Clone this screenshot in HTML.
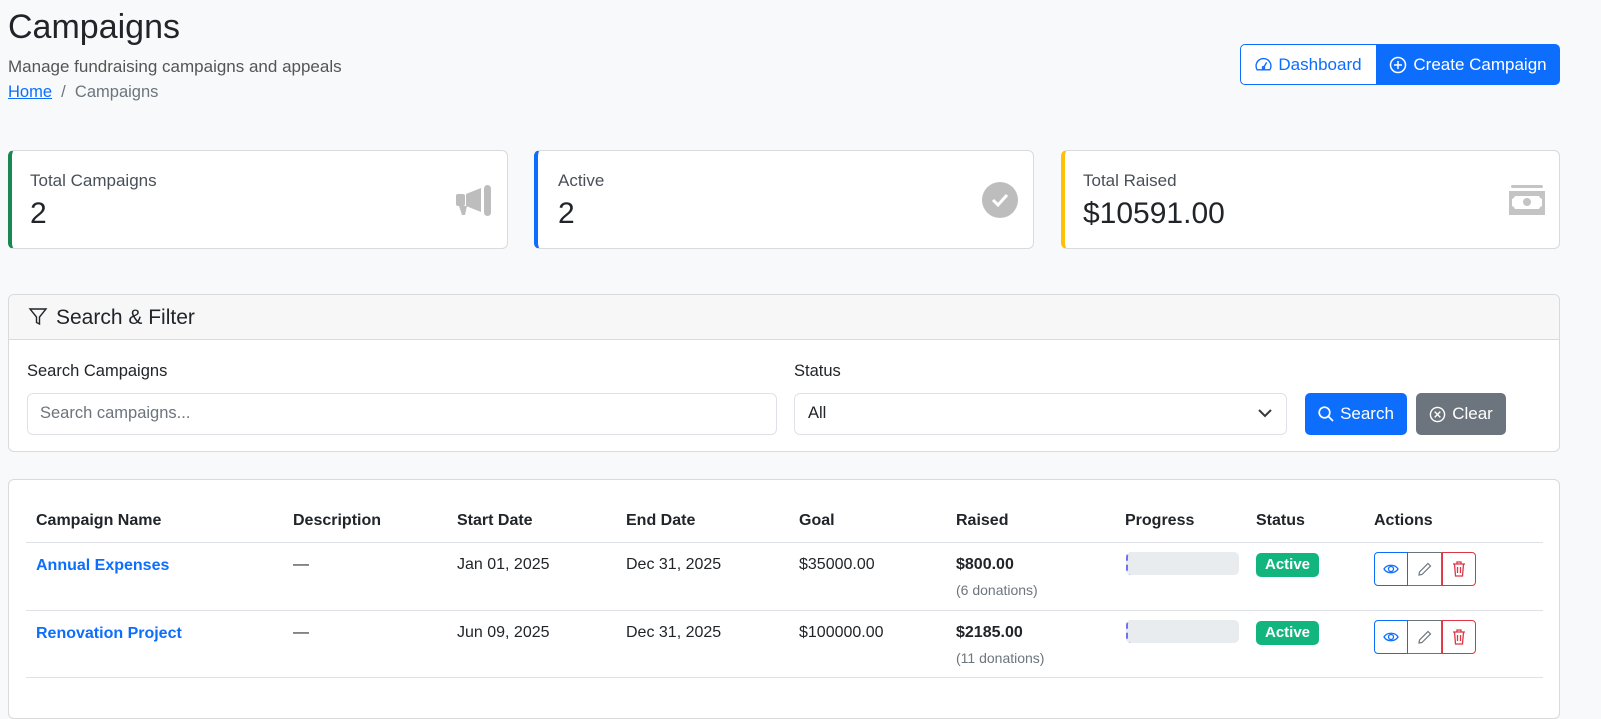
<!DOCTYPE html>
<html><head><style>
*{box-sizing:border-box;margin:0;padding:0}
body{width:1601px;height:706px;background:#f8f9fa;font-family:"Liberation Sans",sans-serif;color:#212529;position:relative;overflow:hidden}
.a{position:absolute}
.card{position:absolute;background:#fff;border:1px solid #dadada;border-radius:6px}
.lbl{font-size:17px;color:#495057}
.val{font-size:30px;color:#212529}
.btn{position:absolute;border-radius:5px;font-size:17px;display:flex;align-items:center;justify-content:center;gap:6px}
.ab{position:absolute;width:34px;height:34px;display:flex;align-items:center;justify-content:center}
</style></head><body>
<div class="a" style="left:8px;top:8px;font-size:34px;font-weight:500">Campaigns</div>
<div class="a" style="left:8px;top:57px;font-size:17px;color:#555">Manage fundraising campaigns and appeals</div>
<div class="a" style="left:8px;top:83px;font-size:16.5px;color:#6c757d"><span style="color:#0d6efd;text-decoration:underline">Home</span>&nbsp; / &nbsp;Campaigns</div>

<div class="btn" style="left:1240px;top:44px;width:137px;height:41px;border:1px solid #0d6efd;border-radius:5px 0 0 5px;color:#0d6efd;background:#fff">
<svg width="17" height="15" viewBox="0 0 16 14" fill="none" stroke="#0d6efd" stroke-width="1.3"><path d="M2 12 A7 7 0 1 1 14 12 Z"/><path d="M8 10 L11 5"/><circle cx="8" cy="10" r="1"/></svg>Dashboard</div>
<div class="btn" style="left:1376px;top:44px;width:184px;height:41px;background:#0d6efd;color:#fff;border-radius:0 5px 5px 0">
<svg width="18" height="18" viewBox="0 0 18 18" fill="none" stroke="#fff" stroke-width="1.5"><circle cx="9" cy="9" r="7.5"/><path d="M9 5v8M5 9h8"/></svg>Create Campaign</div>

<div class="card" style="left:8px;top:150px;width:500px;height:99px;border-left:4px solid #198754">
<div class="a lbl" style="left:18px;top:20px">Total Campaigns</div><div class="a val" style="left:18px;top:46px">2</div>
<svg class="a" style="left:444px;top:34px" width="38" height="32" viewBox="0 0 38 32" fill="#bdbdbd"><rect x="0" y="9" width="9" height="12" rx="2"/><path d="M10 9 L25 3 V27 L10 21Z"/><rect x="28" y="0" width="7" height="31" rx="3.5"/><path d="M3 21 L11 21 L9 30 L6 30Z"/></svg>
</div>
<div class="card" style="left:534px;top:150px;width:500px;height:99px;border-left:4px solid #0d6efd">
<div class="a lbl" style="left:20px;top:20px">Active</div><div class="a val" style="left:20px;top:46px">2</div>
<svg class="a" style="left:444px;top:31px" width="36" height="36" viewBox="0 0 36 36"><circle cx="18" cy="18" r="18" fill="#bdbdbd"/><path d="M11 18 L16 23 L25 13" stroke="#fff" stroke-width="3" fill="none"/></svg>
</div>
<div class="card" style="left:1061px;top:150px;width:499px;height:99px;border-left:4px solid #ffc107">
<div class="a lbl" style="left:18px;top:20px">Total Raised</div><div class="a val" style="left:18px;top:46px">$10591.00</div>
<svg class="a" style="left:444px;top:34px" width="36" height="30" viewBox="0 0 36 30" fill="#c4c4c4"><rect x="2" y="0" width="32" height="3" rx="1.5"/><path d="M0 6h36v24H0Z M6 11 a5 5 0 0 1-3 3v7a5 5 0 0 1 3 3h24a5 5 0 0 1 3-3v-7a5 5 0 0 1-3-3Z" fill-rule="evenodd"/><ellipse cx="18" cy="17" rx="4" ry="4"/></svg>
</div>

<div class="card" style="left:8px;top:294px;width:1552px;height:158px;overflow:hidden">
<div class="a" style="left:0;top:0;width:1552px;height:45px;background:#f7f7f7;border-bottom:1px solid #dadada"></div>
<svg class="a" style="left:19px;top:12px" width="20" height="20" viewBox="0 0 20 20" fill="none" stroke="#212529" stroke-width="1.4"><path d="M2 2h16l-6.5 8v7l-3-1.5V10Z"/></svg>
<div class="a" style="left:47px;top:11px;font-size:21px;font-weight:500">Search &amp; Filter</div>
<div class="a" style="left:18px;top:67px;font-size:16.5px">Search Campaigns</div>
<div class="a" style="left:18px;top:98px;width:750px;height:42px;border:1px solid #dee2e6;border-radius:6px;font-size:16.5px;color:#6c757d;padding:10px 12px">Search campaigns...</div>
<div class="a" style="left:785px;top:67px;font-size:16.5px">Status</div>
<div class="a" style="left:785px;top:98px;width:493px;height:42px;border:1px solid #dee2e6;border-radius:6px;font-size:16.5px;padding:10px 13px">All
<svg class="a" style="right:14px;top:14px" width="14" height="10" viewBox="0 0 14 10" fill="none" stroke="#343a40" stroke-width="2"><path d="M1 2l6 6 6-6"/></svg></div>
<div class="btn" style="left:1296px;top:98px;width:102px;height:42px;background:#0d6efd;color:#fff">
<svg width="16" height="16" viewBox="0 0 16 16" fill="none" stroke="#fff" stroke-width="1.7"><circle cx="6.5" cy="6.5" r="5.3"/><path d="M10.5 10.5 L15 15"/></svg>Search</div>
<div class="btn" style="left:1407px;top:98px;width:90px;height:42px;background:#6c757d;color:#fff">
<svg width="17" height="17" viewBox="0 0 18 18" fill="none" stroke="#fff" stroke-width="1.5"><circle cx="9" cy="9" r="7.5"/><path d="M6 6l6 6M12 6l-6 6"/></svg>Clear</div>
</div>

<div class="card" style="left:8px;top:479px;width:1552px;height:240px">
<div class="a" style="left:17px;top:62px;width:1517px;height:1px;background:#dee2e6"></div>
<div class="a" style="left:17px;top:130px;width:1517px;height:1px;background:#dee2e6"></div>
<div class="a" style="left:17px;top:197px;width:1517px;height:1px;background:#dee2e6"></div>
<div style="font-size:16px;font-weight:bold">
<div class="a" style="left:27px;top:32px">Campaign Name</div><div class="a" style="left:284px;top:32px">Description</div><div class="a" style="left:448px;top:32px">Start Date</div><div class="a" style="left:617px;top:32px">End Date</div><div class="a" style="left:790px;top:32px">Goal</div><div class="a" style="left:947px;top:32px">Raised</div><div class="a" style="left:1116px;top:32px">Progress</div><div class="a" style="left:1247px;top:32px">Status</div><div class="a" style="left:1365px;top:32px">Actions</div>
</div>
<div style="font-size:16px">
<div class="a" style="left:27px;top:77px;color:#0d6efd;font-weight:bold">Annual Expenses</div><div class="a" style="left:284px;top:76px">—</div><div class="a" style="left:448px;top:76px">Jan 01, 2025</div><div class="a" style="left:617px;top:76px">Dec 31, 2025</div><div class="a" style="left:790px;top:76px">$35000.00</div><div class="a" style="left:947px;top:76px;font-weight:bold">$800.00</div><div class="a" style="left:947px;top:102px;font-size:14px;color:#6c757d">(6 donations)</div>
<div class="a" style="left:27px;top:145px;color:#0d6efd;font-weight:bold">Renovation Project</div><div class="a" style="left:284px;top:144px">—</div><div class="a" style="left:448px;top:144px">Jun 09, 2025</div><div class="a" style="left:617px;top:144px">Dec 31, 2025</div><div class="a" style="left:790px;top:144px">$100000.00</div><div class="a" style="left:947px;top:144px;font-weight:bold">$2185.00</div><div class="a" style="left:947px;top:170px;font-size:14px;color:#6c757d">(11 donations)</div>
</div>
<div class="a" style="left:1117px;top:72px;width:113px;height:23px;background:#e9ecef;border-radius:5px;border-left:2px dashed #6f6ff5"></div>
<div class="a" style="left:1117px;top:140px;width:113px;height:23px;background:#e9ecef;border-radius:5px;border-left:2px dashed #6f6ff5"></div>
<div class="a" style="left:1247px;top:73px;width:63px;height:24px;background:#13b57e;color:#fff;border-radius:5px;font-size:15px;font-weight:bold;text-align:center;line-height:24px">Active</div>
<div class="a" style="left:1247px;top:141px;width:63px;height:24px;background:#13b57e;color:#fff;border-radius:5px;font-size:15px;font-weight:bold;text-align:center;line-height:24px">Active</div>
<div class="a" style="left:1365px;top:72px;width:104px;height:35px">
<div class="ab" style="left:0;border:1px solid #0d6efd;border-radius:4px 0 0 4px"><svg width="16" height="12" viewBox="0 0 16 12" fill="none" stroke="#0d6efd" stroke-width="1.3"><path d="M1 6C4 1 12 1 15 6C12 11 4 11 1 6Z"/><circle cx="8" cy="6" r="2.5"/></svg></div>
<div class="ab" style="left:34px;border:1px solid #6c757d;border-left:none"><svg width="15" height="15" viewBox="0 0 15 15" fill="none" stroke="#6c757d" stroke-width="1.2"><path d="M11 1.5l2.5 2.5L5 12.5 2 13l.5-3Z"/></svg></div>
<div class="ab" style="left:68px;border:1px solid #dc3545;border-radius:0 4px 4px 0"><svg width="14" height="16" viewBox="0 0 14 16" fill="none" stroke="#dc3545" stroke-width="1.3"><path d="M1 3h12M5 3V1h4v2M2.5 3l1 12h7l1-12M5.5 6v6M8.5 6v6"/></svg></div>
</div>
<div class="a" style="left:1365px;top:140px;width:104px;height:35px">
<div class="ab" style="left:0;border:1px solid #0d6efd;border-radius:4px 0 0 4px"><svg width="16" height="12" viewBox="0 0 16 12" fill="none" stroke="#0d6efd" stroke-width="1.3"><path d="M1 6C4 1 12 1 15 6C12 11 4 11 1 6Z"/><circle cx="8" cy="6" r="2.5"/></svg></div>
<div class="ab" style="left:34px;border:1px solid #6c757d;border-left:none"><svg width="15" height="15" viewBox="0 0 15 15" fill="none" stroke="#6c757d" stroke-width="1.2"><path d="M11 1.5l2.5 2.5L5 12.5 2 13l.5-3Z"/></svg></div>
<div class="ab" style="left:68px;border:1px solid #dc3545;border-radius:0 4px 4px 0"><svg width="14" height="16" viewBox="0 0 14 16" fill="none" stroke="#dc3545" stroke-width="1.3"><path d="M1 3h12M5 3V1h4v2M2.5 3l1 12h7l1-12M5.5 6v6M8.5 6v6"/></svg></div>
</div>
</div>
</body></html>
